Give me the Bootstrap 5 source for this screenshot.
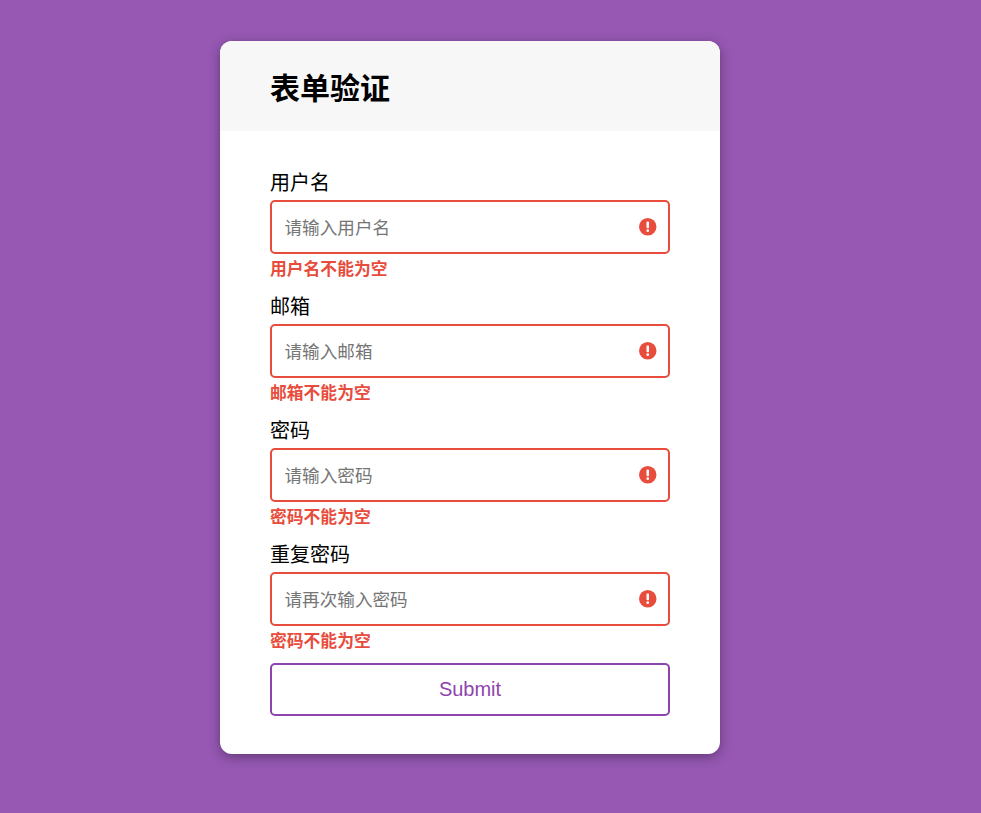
<!DOCTYPE html>
<html lang="zh-CN">
<head>
<meta charset="utf-8">
<title>表单验证</title>
<link rel="stylesheet" href="https://cdn.jsdelivr.net/npm/bootstrap@5.3.0/dist/css/bootstrap.min.css">
<style>
html,body{height:100%;overflow:hidden}
body{background:#9658b3;font-family:"Liberation Sans","Noto Sans CJK SC",sans-serif;color:#000}
.form-shell{width:500px;margin:41px 0 0 220px;border:0;border-radius:12px;box-shadow:0 3px 12px rgba(0,0,0,.35);overflow:hidden;background:#fff}
.form-head{background:#f7f7f7;border:0;border-radius:0;padding:5px 50px 0;height:90px;display:flex;align-items:center}
.form-head h2{margin:0;font-size:30px;font-weight:700;line-height:1;color:#000;font-family:inherit}
.form-main{padding:36px 50px 38px}
.fld-label{display:block;margin:0;padding:1px 0 2px;font-size:20px;line-height:30px;height:33px}
.fld-wrap{position:relative}
.fld-input.form-control{height:54px;border:2px solid #e74c3c;border-radius:5px;padding:2px 40px 0 12.5px;font-size:17.6px;font-family:inherit;color:#000;box-shadow:none;background:#fff}
.fld-input.form-control::placeholder{color:#757575;opacity:1}
.fld-icon{position:absolute;right:13.5px;top:50%;width:17.5px;height:17.5px;margin-top:-8.75px}
.fld-err{font-size:16.8px;font-weight:700;line-height:30px;padding:1px 0 6px;color:#e74c3c}
.send-btn.btn{display:block;width:100%;height:53px;border:2px solid #8e44ad;border-radius:5px;background:#fff;color:#8e44ad;font-size:20px;line-height:1;padding:0 0 2px}
</style>
</head>
<body>
<div class="card form-shell">
  <div class="card-header form-head"><h2>表单验证</h2></div>
  <div class="card-body form-main">
    <form>
      <div>
        <label class="fld-label" for="f1">用户名</label>
        <div class="fld-wrap">
          <input id="f1" class="form-control fld-input" type="text" placeholder="请输入用户名">
          <svg class="fld-icon" viewBox="0 0 18 18"><circle cx="9" cy="9" r="9" fill="#e74c3c"/><rect x="7.7" y="3.6" width="2.6" height="7" rx="1" fill="#fff"/><circle cx="9" cy="13" r="1.4" fill="#fff"/></svg>
        </div>
        <div class="fld-err">用户名不能为空</div>
      </div>
      <div>
        <label class="fld-label" for="f2">邮箱</label>
        <div class="fld-wrap">
          <input id="f2" class="form-control fld-input" type="text" placeholder="请输入邮箱">
          <svg class="fld-icon" viewBox="0 0 18 18"><circle cx="9" cy="9" r="9" fill="#e74c3c"/><rect x="7.7" y="3.6" width="2.6" height="7" rx="1" fill="#fff"/><circle cx="9" cy="13" r="1.4" fill="#fff"/></svg>
        </div>
        <div class="fld-err">邮箱不能为空</div>
      </div>
      <div>
        <label class="fld-label" for="f3">密码</label>
        <div class="fld-wrap">
          <input id="f3" class="form-control fld-input" type="text" placeholder="请输入密码">
          <svg class="fld-icon" viewBox="0 0 18 18"><circle cx="9" cy="9" r="9" fill="#e74c3c"/><rect x="7.7" y="3.6" width="2.6" height="7" rx="1" fill="#fff"/><circle cx="9" cy="13" r="1.4" fill="#fff"/></svg>
        </div>
        <div class="fld-err">密码不能为空</div>
      </div>
      <div>
        <label class="fld-label" for="f4">重复密码</label>
        <div class="fld-wrap">
          <input id="f4" class="form-control fld-input" type="text" placeholder="请再次输入密码">
          <svg class="fld-icon" viewBox="0 0 18 18"><circle cx="9" cy="9" r="9" fill="#e74c3c"/><rect x="7.7" y="3.6" width="2.6" height="7" rx="1" fill="#fff"/><circle cx="9" cy="13" r="1.4" fill="#fff"/></svg>
        </div>
        <div class="fld-err">密码不能为空</div>
      </div>
      <button type="button" class="btn send-btn">Submit</button>
    </form>
  </div>
</div>
<script src="https://cdn.jsdelivr.net/npm/bootstrap@5.3.0/dist/js/bootstrap.bundle.min.js"></script>
</body>
</html>
